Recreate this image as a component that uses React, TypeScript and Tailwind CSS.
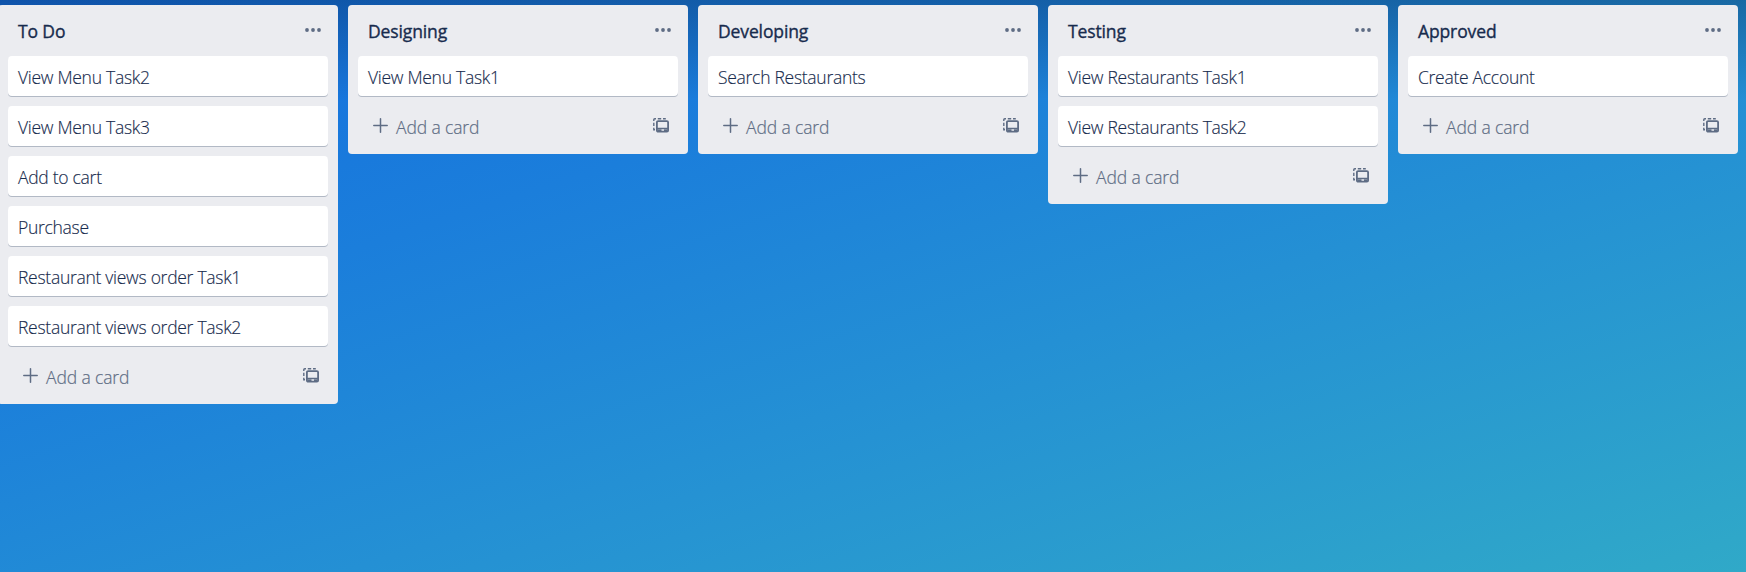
import React from "react";

type List = { title: string; cards: string[] };

const lists: List[] = [
  {
    title: "To Do",
    cards: [
      "View Menu Task2",
      "View Menu Task3",
      "Add to cart",
      "Purchase",
      "Restaurant views order Task1",
      "Restaurant views order Task2",
    ],
  },
  { title: "Designing", cards: ["View Menu Task1"] },
  { title: "Developing", cards: ["Search Restaurants"] },
  { title: "Testing", cards: ["View Restaurants Task1", "View Restaurants Task2"] },
  { title: "Approved", cards: ["Create Account"] },
];

function DotsIcon() {
  return (
    <svg width="16" height="4" viewBox="0 0 16 4" className="mb-[2px] fill-[#5e6c84]">
      <circle cx="2" cy="2" r="1.9" />
      <circle cx="8" cy="2" r="1.9" />
      <circle cx="14" cy="2" r="1.9" />
    </svg>
  );
}

function PlusIcon() {
  return (
    <svg width="15" height="15" viewBox="0 0 15 15" className="fill-none stroke-[#5e6c84]" strokeWidth="1.5" strokeLinecap="round">
      <path d="M7.5 0.8V14.2M0.8 7.5H14.2" />
    </svg>
  );
}

function TemplateIcon() {
  return (
    <svg width="16" height="15" viewBox="0 0 16 15" className="fill-none stroke-[#5e6c84]">
      <path d="M0.8 3V1.8Q0.8 0.8 1.8 0.8H3M4.8 0.8H8.2M10 0.8H12.8M0.8 4.8V8M0.8 9.8V11.8H2" strokeWidth="1.4" />
      <rect x="3.9" y="3.1" width="11.2" height="10.6" rx="1.2" strokeWidth="1.8" />
      <path d="M4 10.5H15M4.5 12.4H8.5M11 12.4H14.5" strokeWidth="1.6" />
    </svg>
  );
}

function Column({ title, cards }: List) {
  return (
    <section className="flex w-[340px] shrink-0 flex-col rounded-[4px] bg-[#ebecf0] px-[10px]">
      <header className="flex h-[51px] items-center justify-between pr-[7px] pl-[10px]">
        <h2 className="pt-[1px] text-[17.5px] leading-[25px] font-normal tracking-[-0.12px] text-[#172b4d] [-webkit-text-stroke:0.35px_#172b4d]">{title}</h2>
        <DotsIcon />
      </header>
      <div className="flex flex-col gap-[10px]">
        {cards.map((card) => (
          <div key={card} className="h-[40px] rounded-[4px] bg-white pt-[9px] pl-[10px] text-[17.5px] leading-[25px] font-light tracking-[-0.28px] text-[#172b4d] shadow-[0_1px_0_#091e4240] [-webkit-text-stroke:0.15px_#172b4d]">
            {card}
          </div>
        ))}
      </div>
      <footer className="flex h-[58px] items-center pr-[9px] pl-[15px] text-[17.5px] text-[#5e6c84]">
        <div className="pt-[1px]">
          <PlusIcon />
        </div>
        <span className="grow pt-[4px] pl-[8px] leading-[25px] font-light tracking-[-0.12px] [-webkit-text-stroke:0.2px_#5e6c84]">Add a card</span>
        <div className="pt-[1px]">
          <TemplateIcon />
        </div>
      </footer>
    </section>
  );
}

export default function App() {
  return (
    <div className="h-[572px] w-full overflow-hidden bg-[linear-gradient(to_bottom,#0000003d_0px,#00000000_100px),linear-gradient(162deg,#136ddf_0%,#1b7edb_32%,#2490d4_60%,#30a9c8_100%)] pt-[5px] font-['Open_Sans',sans-serif]">
      <main className="-ml-[2px] flex items-start gap-[10px]">
        {lists.map((list) => (
          <Column key={list.title} {...list} />
        ))}
      </main>
    </div>
  );
}
